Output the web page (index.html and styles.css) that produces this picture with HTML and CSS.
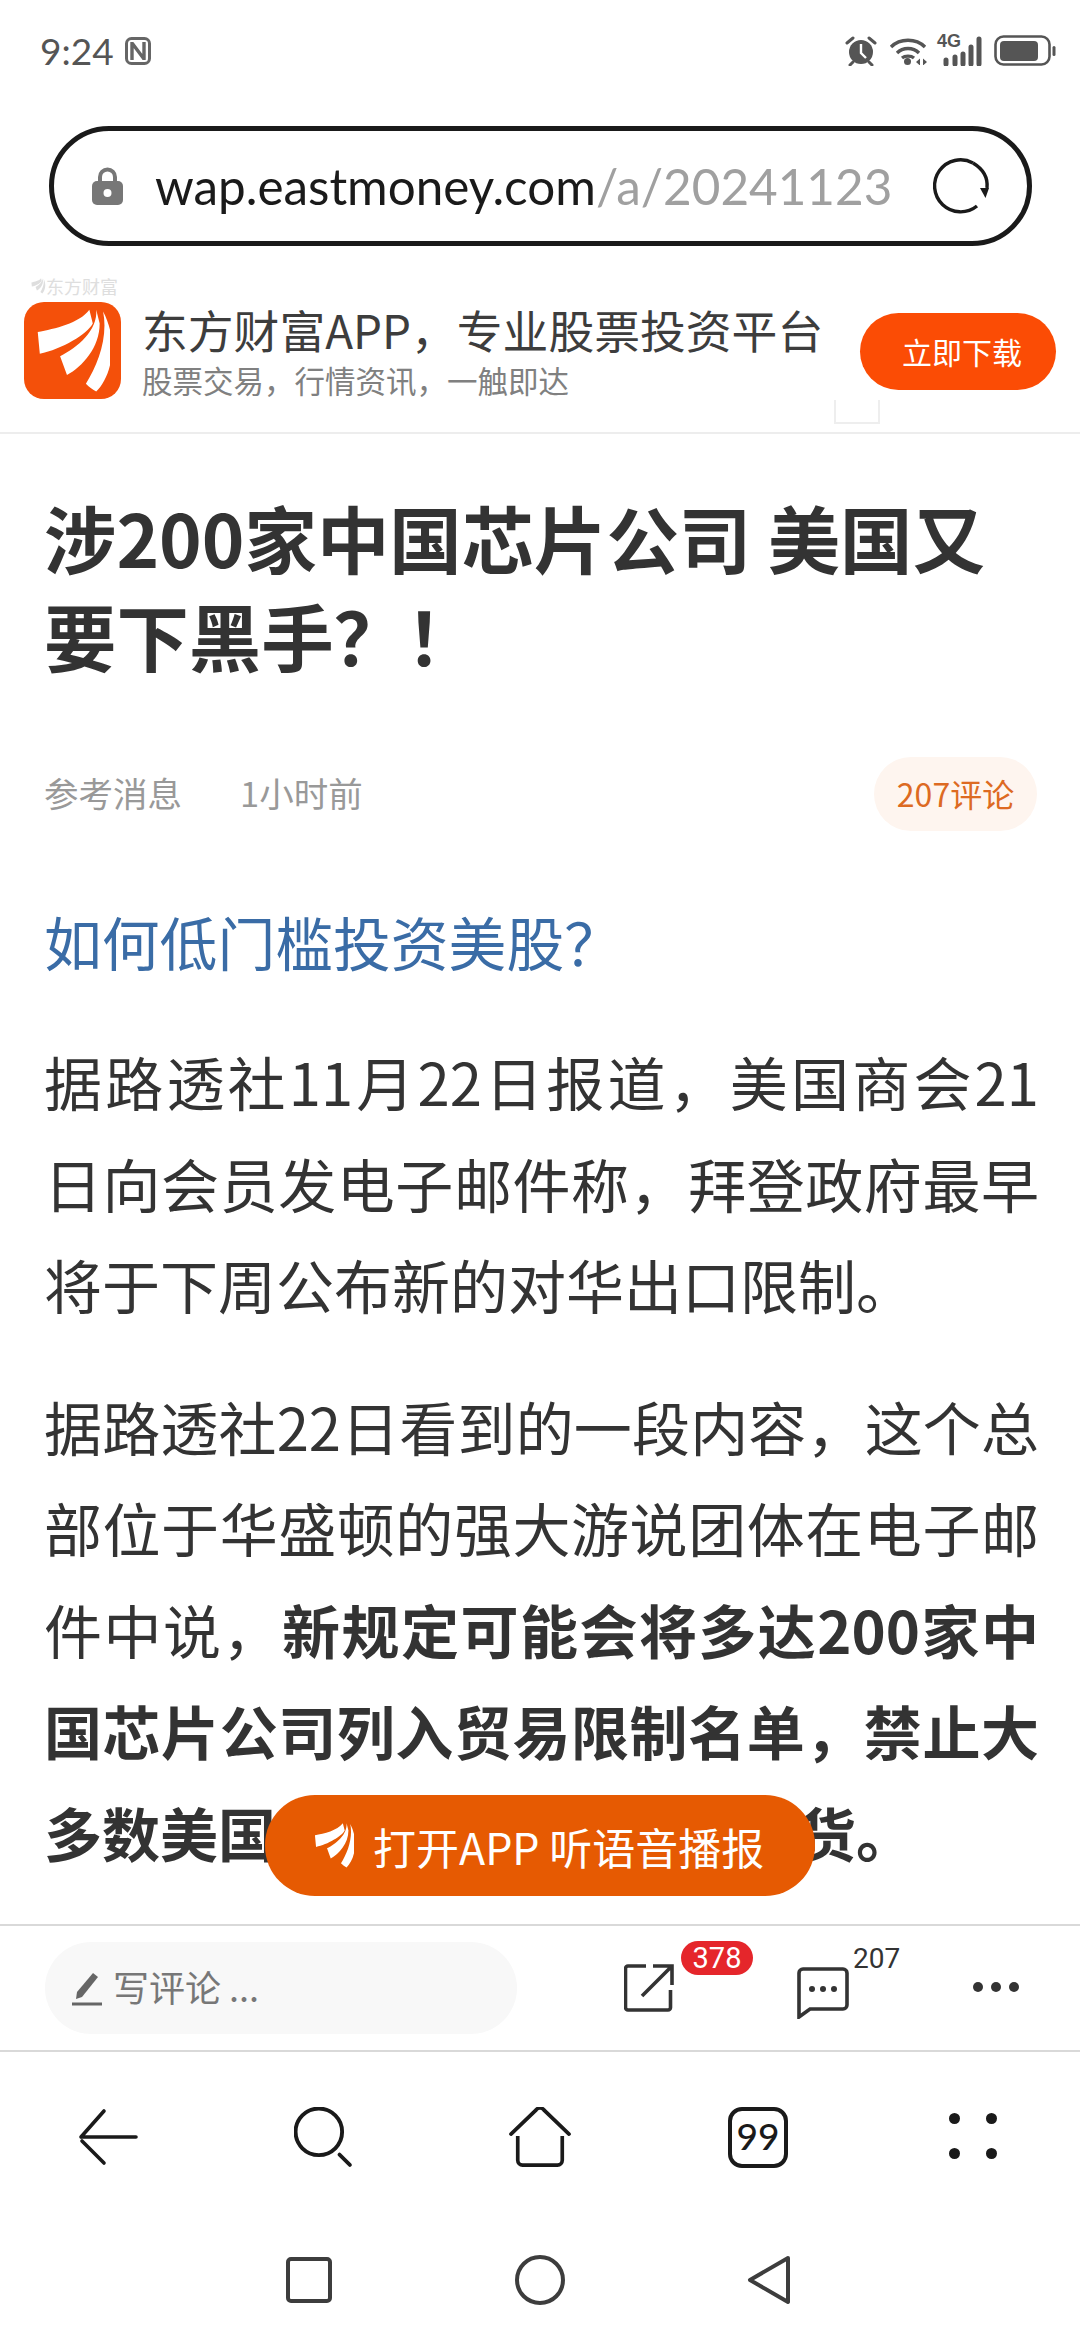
FILE: index.html
```html
<!DOCTYPE html>
<html lang="zh-CN">
<head>
  <meta charset="UTF-8" />
  <meta name="viewport" content="width=device-width, initial-scale=1.0"/>
  <title>东方财富</title>
  <link rel="stylesheet" href="styles.css">
</head>
<body>
  <svg class="defs" width="0" height="0">
    <symbol id="wings" viewBox="25 25 215 250">
      <path d="M180 30C150 70 80 85 30 95L36 158C100 145 175 100 190 70Z"/>
      <path d="M200 30C205 90 145 140 95 165L115 220C160 195 210 140 210 70Z"/>
      <path d="M220 35C235 110 205 190 170 245C180 255 190 262 200 268C240 230 270 130 220 35Z"/>
    </symbol>
  </svg>

  <div class="page">
    <!-- status bar -->
    <div class="status">
      <div class="status-left">
        <span class="time">9:24</span>
        <svg class="nfc" viewBox="0 0 26 28"><rect x="1.500" y="1.500" width="23" height="25" rx="5" fill="none" stroke="#666" stroke-width="3"/><path d="M7 5v18M19 5v18M7 6l12 16" fill="none" stroke="#666" stroke-width="3.400"/></svg>
      </div>
      <div class="status-right">
        <svg class="st-alarm" viewBox="0 0 32 30"><circle cx="16" cy="16" r="12" fill="#555"/><path d="M16 8v9l5 5" fill="none" stroke="#fff" stroke-width="2.400"/><path d="M2 7l6-5M30 7l-6-5M8 26l-3 3M24 26l3 3" stroke="#555" stroke-width="3" stroke-linecap="round"/></svg>
        <svg class="st-wifi" viewBox="0 0 38 28"><path d="M2 10C11 1 27 1 36 10M8 16c6-6 16-6 22 0M13 21c3-2.500 9-2.500 12 0" fill="none" stroke="#555" stroke-width="3.400"/><circle cx="18.500" cy="24.500" r="3.500" fill="#555"/><path d="M27 25l4-3.500v7zM38 25l-4-3.500v7z" fill="#555"/></svg>
        <div class="st-signal">
          <span class="st-4g">4G</span>
          <svg viewBox="0 0 46 30"><path d="M9 24v4M18 21v7M26 18v10M34 11v17M42 3v25" stroke="#555" stroke-width="5" stroke-linecap="round"/></svg>
        </div>
        <svg class="st-batt" viewBox="0 0 62 32"><rect x="1.500" y="1.500" width="54" height="28" rx="8" fill="none" stroke="#555" stroke-width="2.600"/><rect x="6" y="6" width="38" height="20" rx="4" fill="#555"/><rect x="58.500" y="11" width="3" height="10" rx="1.500" fill="#555"/></svg>
      </div>
    </div>

    <!-- address bar -->
    <div class="addr-wrap">
      <div class="addr">
        <svg class="lock" viewBox="0 0 31 38"><path d="M8 16V10a7.500 7.500 0 0 1 15 0v6" fill="none" stroke="#777" stroke-width="4"/><rect x="0" y="14" width="31" height="24" rx="5" fill="#777"/><circle cx="15.500" cy="26" r="4" fill="#fff"/></svg>
        <div class="url"><span class="url-host">wap.eastmoney.com</span><span class="url-path">/a/202411233</span></div>
        <svg class="reload" viewBox="0 0 60 60"><path d="M42 7A26 26 0 1 0 46 50" fill="none" stroke="#1a1a1a" stroke-width="3.400"/><path d="M42 7C52 13 57 22 56 32" fill="none" stroke="#1a1a1a" stroke-width="3.400"/><path d="M49 32h9l-3.500 10z" fill="#1a1a1a"/></svg>
      </div>
    </div>

    <!-- app banner -->
    <div class="banner">
      <div class="ghost-mark"><svg viewBox="0 0 20 20"><use href="#wings" fill="#dedede"/></svg>东方财富</div>
      <div class="ghost-box"></div>
      <div class="app-logo"><svg viewBox="0 0 215 250"><use href="#wings" fill="#fff"/></svg></div>
      <div class="banner-text">
        <div class="banner-title">东方财富APP，专业股票投资平台</div>
        <div class="banner-sub">股票交易，行情资讯，一触即达</div>
      </div>
      <div class="btn-download">立即下载</div>
    </div>

    <!-- article -->
    <div class="article">
      <h1 class="headline">涉200家中国芯片公司 美国又要下黑手？！</h1>
      <div class="meta">
        <span class="source">参考消息</span>
        <span class="ago">1小时前</span>
        <span class="pill">207评论</span>
      </div>
      <div class="promo">如何低门槛投资美股？</div>
      <p>据路透社11月22日报道，美国商会21日向会员发电子邮件称，拜登政府最早将于下周公布新的对华出口限制。</p>
      <p>据路透社22日看到的一段内容，这个总部位于华盛顿的强大游说团体在电子邮件中说，<b>新规定可能会将多达200家中国芯片公司列入贸易限制名单，禁止大多数美国供应商向这些公司供货。</b></p>
      <div class="listen">
        <svg viewBox="0 0 215 250"><use href="#wings" fill="#fff"/></svg>
        <span>打开APP 听语音播报</span>
      </div>
    </div>

    <!-- comment toolbar -->
    <div class="tools">
      <div class="write">
        <svg viewBox="0 0 32 36"><path d="M6 22L22 3l5 4L11 27l-6 2z" fill="#666"/><path d="M1 34h30" stroke="#666" stroke-width="3"/></svg>
        <span class="write-label">写评论 ...</span>
      </div>
      <div class="share">
        <svg viewBox="0 0 50 50"><path d="M22 3H4a2.500 2.500 0 0 0-2.500 2.500v39A2.500 2.500 0 0 0 4 47h40a2.500 2.500 0 0 0 2.500-2.500V27" fill="none" stroke="#333" stroke-width="3.600"/><path d="M18 33L47 4M29 3h19v19" fill="none" stroke="#333" stroke-width="3.600"/></svg>
        <span class="badge">378</span>
      </div>
      <div class="comment">
        <svg viewBox="0 0 52 52"><path d="M6 2h40a4 4 0 0 1 4 4v32a4 4 0 0 1-4 4H13L2 50V6a4 4 0 0 1 4-4z" fill="none" stroke="#333" stroke-width="3.600"/><circle cx="15" cy="22" r="3" fill="#333"/><circle cx="26" cy="22" r="3" fill="#333"/><circle cx="37" cy="22" r="3" fill="#333"/></svg>
        <span class="count">207</span>
      </div>
      <div class="more"><i></i><i></i><i></i></div>
    </div>

    <!-- browser nav -->
    <div class="browser-nav">
      <svg class="nav-icon" viewBox="0 0 60 54"><path d="M26 1L3 27M3 27h55M4 31l22 22" fill="none" stroke="#1a1a1a" stroke-width="3.600" stroke-linecap="round"/></svg>
      <svg class="nav-icon" viewBox="0 0 58 58"><circle cx="24" cy="24" r="22.500" fill="none" stroke="#1a1a1a" stroke-width="3.800"/><path d="M44 46l10 10" stroke="#1a1a1a" stroke-width="3.600" stroke-linecap="round"/></svg>
      <svg class="nav-icon" viewBox="0 0 64 62"><path d="M2 28L28 3a5 5 0 0 1 8 0l26 25" fill="none" stroke="#1a1a1a" stroke-width="3.800" stroke-linecap="round"/><path d="M9 30v25a5 5 0 0 0 5 5h36a5 5 0 0 0 5-5V30" fill="none" stroke="#1a1a1a" stroke-width="3.800"/></svg>
      <div class="tabs">99</div>
      <div class="dots"><i></i><i></i><i></i><i></i></div>
    </div>

    <!-- system nav -->
    <div class="sys-nav">
      <svg viewBox="0 0 46 46"><rect x="2" y="2" width="42" height="42" rx="3" fill="none" stroke="#3d3d3d" stroke-width="4"/></svg>
      <svg viewBox="0 0 50 50"><circle cx="25" cy="25" r="23" fill="none" stroke="#3d3d3d" stroke-width="4"/></svg>
      <svg viewBox="0 0 46 50"><path d="M42 3L4 25l38 22z" fill="none" stroke="#3d3d3d" stroke-width="4" stroke-linejoin="round"/></svg>
    </div>
  </div>
</body>
</html>
```

FILE: styles.css
```css
* {
  box-sizing: border-box;
}

body {
  margin: 0;
  background: #fff;
  font-family: "Noto Sans CJK SC", "Noto Sans", sans-serif;
  color: #333;
}

.defs {
  position: absolute;
}

.page {
  width: 1080px;
  height: 2340px;
  display: flex;
  flex-direction: column;
  overflow: hidden;
}

/* status bar */
.status {
  height: 102px;
  flex: none;
  padding: 32px 24px 0 40px;
  display: flex;
  justify-content: space-between;
  align-items: flex-start;
}

.status-left {
  display: flex;
  align-items: center;
  gap: 11px;
}

.time {
  font-family: Lato, sans-serif;
  font-size: 37px;
  line-height: 38px;
  color: #555;
}

.nfc {
  width: 26px;
  height: 28px;
}

.status-right {
  display: flex;
  align-items: center;
  height: 38px;
}

.st-alarm {
  width: 32px;
  height: 30px;
}

.st-wifi {
  width: 38px;
  height: 28px;
  margin-left: 12px;
}

.st-signal {
  position: relative;
  width: 46px;
  height: 30px;
  margin-left: 10px;
}

.st-signal svg {
  position: absolute;
  left: 0;
  top: 0;
  width: 46px;
  height: 30px;
}

.st-4g {
  position: absolute;
  left: 0;
  top: -3px;
  font-family: "Liberation Sans", sans-serif;
  font-size: 18px;
  font-weight: bold;
  line-height: 16px;
  color: #555;
}

.st-batt {
  width: 62px;
  height: 32px;
  margin-left: 11px;
}

/* address bar */
.addr-wrap {
  padding: 24px 48px 0 49px;
  height: 158px;
  flex: none;
}

.addr {
  height: 120px;
  border: 5px solid #1a1a1a;
  border-radius: 60px;
  display: flex;
  align-items: center;
  padding: 0 0 0 38px;
}

.lock {
  width: 31px;
  height: 38px;
  flex: none;
}

.url {
  width: 736px;
  margin-left: 32px;
  font-family: Lato, sans-serif;
  font-size: 49.400px;
  line-height: 70px;
  white-space: nowrap;
  overflow: hidden;
}

.url-host {
  color: #1a1a1a;
}

.url-path {
  color: #a0a0a0;
}

.reload {
  width: 60px;
  height: 60px;
  margin-left: 40px;
  flex: none;
}

/* app banner */
.banner {
  position: relative;
  height: 174px;
  flex: none;
  padding: 42px 24px 0;
  border-bottom: 2px solid #ededed;
  display: flex;
  align-items: flex-start;
}

.ghost-mark {
  position: absolute;
  left: 30px;
  top: 16px;
  display: flex;
  align-items: center;
  font-size: 18px;
  line-height: 20px;
  color: #dedede;
}

.ghost-mark svg {
  width: 16px;
  height: 18px;
}

.ghost-box {
  position: absolute;
  left: 834px;
  top: 140px;
  width: 46px;
  height: 24px;
  border: 2px solid #eee;
  border-top: none;
}

.app-logo {
  width: 97px;
  height: 97px;
  border-radius: 20px;
  background: #f4500a;
  display: flex;
  align-items: center;
  justify-content: center;
  flex: none;
}

.app-logo svg {
  width: 74px;
  height: 86px;
}

.banner-text {
  margin-left: 21px;
  width: 706px;
}

.banner-title {
  font-size: 45.800px;
  line-height: 58px;
  color: #3d3d3d;
  margin-top: -2px;
}

.banner-sub {
  font-size: 30.500px;
  line-height: 44px;
  color: #808080;
}

.btn-download {
  position: absolute;
  left: 860px;
  top: 53px;
  width: 196px;
  height: 77px;
  border-radius: 39px;
  background: #fb4c05;
  color: #fff;
  font-size: 30px;
  line-height: 77px;
  text-align: center;
  padding-left: 8px;
}

/* article */
.article {
  position: relative;
  flex: 1;
  padding: 54px 41px 0 44px;
  overflow: hidden;
}

.headline {
  margin: 0;
  font-size: 72.400px;
  line-height: 98px;
  font-weight: bold;
  color: #333;
}

.meta {
  position: relative;
  margin-top: 73px;
  height: 74px;
  padding-bottom: 5px;
  display: flex;
  align-items: center;
  font-size: 34.500px;
  color: #999;
}

.ago {
  margin-left: 58px;
}

.pill {
  position: absolute;
  right: 2px;
  top: 0;
  width: 163px;
  height: 74px;
  border-radius: 37px;
  background: #fef5ef;
  color: #dd6a22;
  font-size: 32px;
  line-height: 72px;
  text-align: center;
}

.promo {
  margin-top: 60px;
  margin-bottom: 8px;
  font-size: 57.800px;
  line-height: 100px;
  color: #3a6ca6;
}

.article p {
  margin: 40px 0 0;
  font-size: 58px;
  line-height: 101.500px;
  text-align: justify;
  color: #333;
}

.listen {
  position: absolute;
  left: 265px;
  top: 1361px;
  width: 550px;
  height: 101px;
  border-radius: 50px;
  background: #e65a02;
  display: flex;
  align-items: center;
  padding-left: 49px;
  color: #fff;
  font-size: 43px;
}

.listen svg {
  width: 40px;
  height: 47px;
  margin-right: 19px;
}

/* comment toolbar */
.tools {
  position: relative;
  height: 128px;
  border-top: 2px solid #d9d9d9;
  border-bottom: 2px solid #d9d9d9;
  flex: none;
}

.write {
  position: absolute;
  left: 45px;
  top: 16px;
  width: 472px;
  height: 92px;
  border-radius: 46px;
  background: #f8f8f8;
  display: flex;
  align-items: center;
  padding-left: 26px;
  font-size: 36px;
  color: #777;
}

.write svg {
  width: 32px;
  height: 36px;
  margin-right: 10px;
}

.write-label {
  margin-top: -5px;
}

.share svg {
  position: absolute;
  left: 624px;
  top: 37px;
  width: 50px;
  height: 50px;
}

.badge {
  position: absolute;
  left: 681px;
  top: 15px;
  width: 72px;
  height: 34px;
  border-radius: 17px;
  background: #e5262b;
  color: #fff;
  font-family: Roboto, sans-serif;
  font-size: 29px;
  line-height: 34px;
  text-align: center;
}

.comment svg {
  position: absolute;
  left: 797px;
  top: 41px;
  width: 52px;
  height: 52px;
}

.count {
  position: absolute;
  left: 853px;
  top: 19px;
  font-family: Roboto, sans-serif;
  font-size: 28px;
  line-height: 28px;
  color: #333;
}

.more {
  position: absolute;
  left: 973px;
  top: 56px;
  display: flex;
  gap: 8px;
}

.more i {
  width: 10px;
  height: 10px;
  border-radius: 50%;
  background: #333;
}

/* browser nav */
.browser-nav {
  height: 184px;
  flex: none;
  position: relative;
}

.nav-icon {
  position: absolute;
  top: 55px;
  width: 60px;
  height: 60px;
}

.nav-icon:nth-child(1) {
  left: 78px;
}

.nav-icon:nth-child(2) {
  left: 294px;
}

.nav-icon:nth-child(3) {
  left: 508px;
  width: 64px;
}

.tabs {
  position: absolute;
  left: 728px;
  top: 55px;
  width: 60px;
  height: 61px;
  border: 4px solid #1a1a1a;
  border-radius: 14px;
  font-family: Lato, sans-serif;
  font-size: 37px;
  font-weight: 500;
  line-height: 50px;
  text-align: center;
  color: #1a1a1a;
}

.dots {
  position: absolute;
  left: 949px;
  top: 61px;
  width: 48px;
  height: 46px;
  display: grid;
  grid-template-columns: 11px 11px;
  justify-content: space-between;
  align-content: space-between;
}

.dots i {
  width: 11px;
  height: 11px;
  border-radius: 50%;
  background: #1a1a1a;
}

/* system nav */
.sys-nav {
  position: relative;
  height: 104px;
  flex: none;
}

.sys-nav svg {
  position: absolute;
  top: 19px;
  height: 50px;
}

.sys-nav svg:nth-child(1) {
  left: 286px;
  top: 21px;
  width: 46px;
  height: 46px;
}

.sys-nav svg:nth-child(2) {
  left: 515px;
  width: 50px;
}

.sys-nav svg:nth-child(3) {
  left: 746px;
  width: 46px;
}
```
